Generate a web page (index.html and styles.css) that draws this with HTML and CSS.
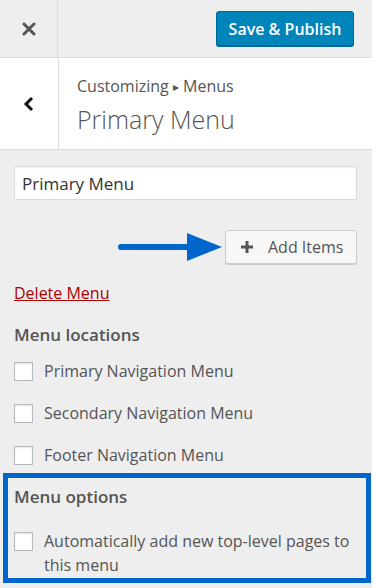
FILE: index.html
```html
<!DOCTYPE html>
<html>
<head>
<meta charset="utf-8">
<link rel="stylesheet" href="styles.css">
</head>
<body>
<div class="panel">
  <div class="topbar">
    <div class="close">
      <svg width="14" height="14" viewBox="0 0 14 14"><path d="M2 2 L12 12 M12 2 L2 12" stroke="#555" stroke-width="3" stroke-linecap="round"/></svg>
    </div>
    <button class="publish">Save &amp; Publish</button>
  </div>
  <div class="section-head">
    <div class="back">
      <svg width="12" height="16" viewBox="0 0 12 16"><path d="M9 2 L3 8 L9 14" fill="none" stroke="#111" stroke-width="3" stroke-linejoin="miter"/></svg>
    </div>
    <div class="titles">
      <div class="crumb">Customizing <span class="tri">&#9656;</span> Menus</div>
      <div class="title">Primary Menu</div>
    </div>
  </div>
  <div class="content">
    <input class="name" type="text" value="Primary Menu">
    <div class="add-row">
      <svg class="arrow" width="106" height="30" viewBox="0 0 106 30"><path d="M4 15 H74" stroke="#0066cc" stroke-width="6" stroke-linecap="round"/><path d="M70 1 L105 15 L70 29 Z" fill="#0066cc"/></svg>
      <button class="add"><span class="plus">
        <svg width="14" height="14" viewBox="0 0 14 14"><path d="M7 1 V13 M1 7 H13" stroke="#555" stroke-width="3"/></svg>
      </span>Add Items</button>
    </div>
    <a class="delete" href="#">Delete Menu</a>
    <h3 class="heading">Menu locations</h3>
    <label class="check first"><span class="box"></span>Primary Navigation Menu</label>
    <label class="check"><span class="box"></span>Secondary Navigation Menu</label>
    <label class="check"><span class="box"></span>Footer Navigation Menu</label>
    <div class="options">
      <h3 class="heading">Menu options</h3>
      <label class="check multi"><span class="box"></span><span>Automatically add new top-level pages to this menu</span></label>
    </div>
  </div>
</div>
</body>
</html>
```
FILE: styles.css
```css
html, body { margin: 0; padding: 0; background: #fff; }
body { font-family: "Open Sans", "Noto Sans", sans-serif; color: #555; }
.panel { width: 372px; height: 588px; background: #eee; overflow: hidden; }
.topbar { height: 57px; display: flex; align-items: center; border-bottom: 1px solid #ddd; background: #eee; }
.close { width: 58px; height: 57px; border-right: 1px solid #ddd; display: flex; align-items: center; justify-content: center; box-sizing: border-box; }
.publish { margin-left: auto; margin-right: 18px; height: 35px; width: 138px; background: #0085ba; border: 1px solid #006799; border-radius: 3px; color: #fff; font-family: "Open Sans", sans-serif; font-weight: 600; font-size: 16px; box-shadow: 0 1px 0 #006799; padding: 0; }
.section-head { height: 91px; display: flex; background: #fff; border-bottom: 1px solid #ddd; }
.back { width: 59px; border-right: 1px solid #ddd; display: flex; align-items: center; justify-content: center; box-sizing: border-box; }
.titles { padding: 17px 0 0 18px; }
.crumb { font-size: 16px; line-height: 22px; color: #555; }
.tri { font-size: 12px; position: relative; top: -1px; }
.title { font-size: 25px; line-height: 32px; font-weight: 300; color: #555; margin-top: 4px; }
.content { padding: 16px 15px 0 14px; }
.name { display: block; box-sizing: border-box; width: 343px; height: 34px; border: 1px solid #ddd; background: #fff; font-family: "Open Sans", sans-serif; font-size: 17px; color: #333; padding: 0 7px; margin: 0; box-shadow: inset 0 1px 2px rgba(0,0,0,.07); }
.add-row { display: flex; justify-content: flex-end; align-items: center; margin-top: 30px; gap: 2px; }
.arrow { display: block; }
.add { height: 34px; width: 132px; background: #f7f7f7; border: 1px solid #ccc; border-radius: 3px; box-shadow: 0 1px 0 #ccc; font-family: "Open Sans", sans-serif; font-size: 16px; color: #555; display: flex; align-items: center; padding: 0 0 0 14px; }
.plus { display: flex; margin-right: 14px; }
.delete { display: inline-block; margin-top: 18px; color: #a00; font-size: 16px; line-height: 22px; text-decoration: underline; }
.heading { margin: 20px 0 0; font-size: 17px; font-weight: 600; line-height: 22px; color: #555; }
.check { display: flex; align-items: center; font-size: 16px; line-height: 24px; color: #555; margin-top: 18px; }
.check.first { margin-top: 13px; }
.box { width: 17px; height: 17px; border: 1px solid #b4b9be; background: #fff; box-shadow: inset 0 1px 2px rgba(0,0,0,.1); margin-right: 11px; flex: none; }
.multi { align-items: flex-start; }
.multi .box { margin-top: 3px; }
.options { margin: 6px -14px 0 -11px; border: 5px solid #0066cc; padding: 8px 6px 1px 6px; }
.options .heading { margin-top: 0; }
.options .check { margin-top: 21px; }
```
